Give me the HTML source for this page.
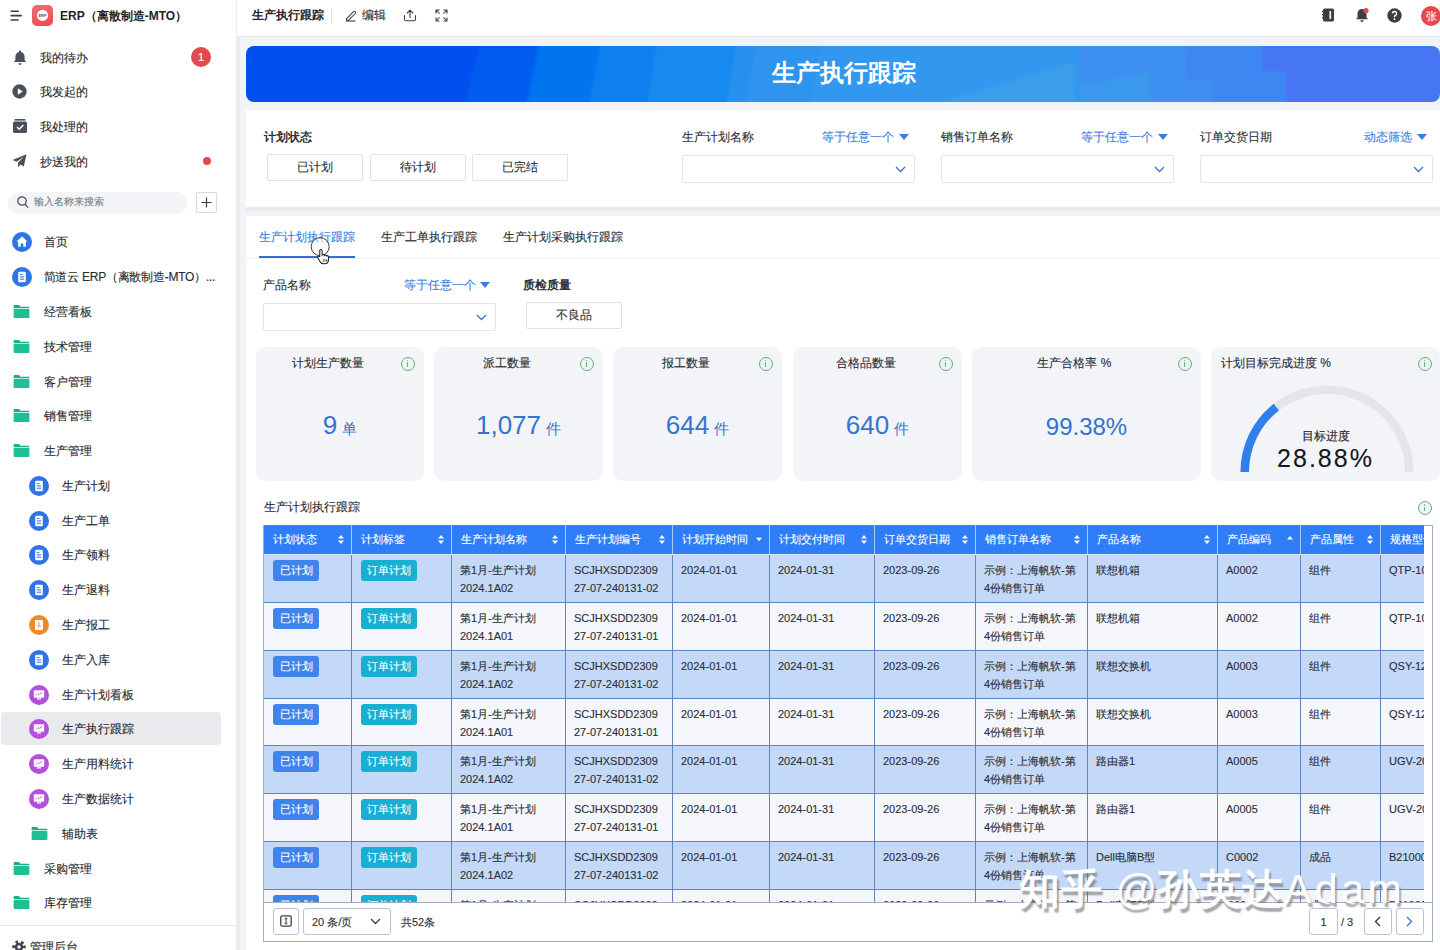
<!DOCTYPE html><html><head><meta charset="utf-8"><title>生产执行跟踪</title><style>
*{box-sizing:border-box;margin:0;padding:0}
html,body{width:1440px;height:950px;overflow:hidden;background:#f2f3f7;font-family:"Liberation Sans",sans-serif;color:#1f2329;-webkit-text-stroke:0.12px currentColor}
b,.val,[style*="bold"]{-webkit-text-stroke:0}
.abs{position:absolute}
.t{position:absolute;white-space:nowrap;line-height:1}
#side{position:absolute;left:0;top:0;width:240px;height:950px;background:#fff;border-right:4px solid #ebebef}
#top{position:absolute;left:237px;top:0;width:1203px;height:37px;background:#fff;border-bottom:1px solid #e8e9ee}
.mi{position:absolute;font-size:12px;color:#262a30;white-space:nowrap;line-height:1}
.card{position:absolute;top:347px;height:134px;background:#f3f4f8;border-radius:10px}
.ct{position:absolute;top:357px;font-size:12px;color:#2b2f36;white-space:nowrap;line-height:1}
.val{position:absolute;top:412px;font-size:26px;color:#3473d0;white-space:nowrap;line-height:1}
.val small{font-size:14.5px;margin-left:5px}
.info{position:absolute;width:14px;height:14px;border:1.3px solid #6ea483;border-radius:50%;background:#e9f8ee}
.info:before{content:"";position:absolute;left:4.9px;top:2.3px;width:1.5px;height:1.5px;background:#6ea483;border-radius:1px}
.info:after{content:"";position:absolute;left:4.9px;top:4.6px;width:1.5px;height:4.8px;background:#6ea483;border-radius:1px}
.btn{position:absolute;height:27px;border:1px solid #dfe1e6;border-radius:2px;background:#fff;font-size:12px;color:#2b2f36;text-align:center;line-height:25px}
.sel{position:absolute;height:28px;border:1px solid #e3e5ea;border-radius:2px;background:#fff}
.lbl{position:absolute;font-size:12px;color:#2b2f36;white-space:nowrap;line-height:1}
.blue{color:#3b7ddd}
.th{position:absolute;top:525px;height:29px;background:#2f7ef7;color:#fff;font-size:11px;line-height:29px;padding-left:10px;white-space:nowrap;overflow:hidden}
.cell{position:absolute;font-size:11px;color:#2b2f36;line-height:17.5px;padding-left:9px;padding-top:7px;white-space:nowrap;overflow:hidden}
.bd{position:absolute;top:8px;height:21px;border-radius:3px;color:#fff;font-size:11px;line-height:21px;text-align:center}
</style></head><body>
<div id="side">
<svg class="abs" style="left:10px;top:10px" width="14" height="12" viewBox="0 0 14 12"><rect x="0.4" y="0.4" width="8.6" height="1.6" rx=".8" fill="#3a3f47"/><rect x="0.4" y="4.8" width="11.6" height="1.6" rx=".8" fill="#3a3f47"/><rect x="0.4" y="9.2" width="8.4" height="1.6" rx=".8" fill="#3a3f47"/></svg>
<div class="abs" style="left:32px;top:5px;width:21px;height:21px;border-radius:5px;background:linear-gradient(160deg,#ee6e78,#f04a4a)"></div>
<svg class="abs" style="left:32px;top:5px" width="21" height="21" viewBox="0 0 21 21"><circle cx="10.5" cy="10.4" r="5.6" fill="#fff"/><text x="10.5" y="12" font-size="4" font-family="Liberation Sans" font-weight="bold" text-anchor="middle" fill="#6a4a50">ERP</text></svg>
<div class="t" style="left:60px;top:10px;font-size:12px;font-weight:bold;color:#1f2329">ERP（离散制造-MTO）</div>
<svg class="abs" style="left:13px;top:50px" width="14" height="15" viewBox="0 0 14 15"><path d="M7 0.5c.6 0 1 .4 1 1v.6c2.2.5 3.6 2.4 3.6 4.7v3.2l1.6 2H0.8l1.6-2V6.8c0-2.3 1.4-4.2 3.6-4.7V1.5c0-.6.4-1 1-1zM5.3 13.2h3.4a1.7 1.7 0 0 1-3.4 0z" fill="#4a505a"/></svg>
<div class="mi" style="left:39.7px;top:52px">我的待办</div>
<div class="abs" style="left:191px;top:47px;width:20px;height:20px;border-radius:50%;background:#e5484d;color:#fff;font-size:11px;text-align:center;line-height:20px">1</div>
<svg class="abs" style="left:12px;top:84px" width="15" height="15" viewBox="0 0 15 15"><circle cx="7.5" cy="7.5" r="7.2" fill="#4a505a"/><path d="M5.8 4.3v6.4l5-3.2z" fill="#fff"/></svg>
<div class="mi" style="left:39.7px;top:86px">我发起的</div>
<svg class="abs" style="left:13px;top:119px" width="14" height="14" viewBox="0 0 14 14"><rect x="0" y="2.5" width="14" height="11.5" rx="1.5" fill="#4a505a"/><rect x="1.5" y="0" width="11" height="1.6" fill="#4a505a"/><path d="M4 8l2.2 2.2L10.3 6" stroke="#fff" stroke-width="1.6" fill="none"/></svg>
<div class="mi" style="left:39.7px;top:121px">我处理的</div>
<svg class="abs" style="left:12px;top:154px" width="15" height="14" viewBox="0 0 15 14"><path d="M14.5 0.3L0.5 6l4.2 1.8L12 2.5 6 8.8v4.7l2.4-3 3.4 2z" fill="#4a505a"/></svg>
<div class="mi" style="left:39.7px;top:156px">抄送我的</div>
<div class="abs" style="left:203px;top:157px;width:8px;height:8px;border-radius:50%;background:#e5484d"></div>
<div class="abs" style="left:8px;top:192px;width:179px;height:22px;border-radius:11px;background:#f3f4f7"></div>
<svg class="abs" style="left:17px;top:196px" width="12" height="13" viewBox="0 0 12 13"><circle cx="5" cy="5" r="4.2" stroke="#4a505a" stroke-width="1.3" fill="none"/><path d="M8 8.2l3.2 3.4" stroke="#4a505a" stroke-width="1.3"/></svg>
<div class="t" style="left:34px;top:197px;font-size:10px;color:#7a808a">输入名称来搜索</div>
<div class="abs" style="left:196px;top:192px;width:21px;height:21px;border:1px solid #d7d9de;border-radius:2px;background:#fff"></div>
<svg class="abs" style="left:201px;top:197px" width="11" height="11" viewBox="0 0 11 11"><path d="M5.5 0.5v10M0.5 5.5h10" stroke="#3a3f47" stroke-width="1.2"/></svg>
<svg class="abs" style="left:12px;top:231.7px" width="20" height="20" viewBox="0 0 20 20"><circle cx="10" cy="10" r="10" fill="#2f74e6"/><path d="M10 4.5l5.5 5h-1.6v5.2h-2.6v-3.2H8.7v3.2H6.1V9.5H4.5z" fill="#fff"/></svg>
<div class="mi" style="left:43.7px;top:236px">首页</div>
<svg class="abs" style="left:12px;top:266.7px" width="20" height="20" viewBox="0 0 20 20"><circle cx="10" cy="10" r="10" fill="#2f74e6"/><rect x="6.2" y="4.8" width="7.6" height="10.4" rx="1.2" fill="#fff"/><path d="M7.8 7.6h2.6M7.8 9.9h4.4M7.8 12.2h4.4" stroke="#2f74e6" stroke-width="1"/></svg>
<div class="mi" style="left:43.7px;top:271px"><span style="letter-spacing:-0.25px">简道云 ERP（离散制造-MTO）...</span></div>
<svg class="abs" style="left:13px;top:305px" width="17" height="13" viewBox="0 0 17 14"><path d="M0 1.2C0 .5.5 0 1.2 0h4.6l1.6 1.8h8.4c.7 0 1.2.5 1.2 1.2v.6H0z" fill="#18b189"/><rect x="0" y="4.3" width="17" height="9.7" rx="1" fill="#1fbf95"/></svg>
<div class="mi" style="left:43.7px;top:306px">经营看板</div>
<svg class="abs" style="left:13px;top:340px" width="17" height="13" viewBox="0 0 17 14"><path d="M0 1.2C0 .5.5 0 1.2 0h4.6l1.6 1.8h8.4c.7 0 1.2.5 1.2 1.2v.6H0z" fill="#18b189"/><rect x="0" y="4.3" width="17" height="9.7" rx="1" fill="#1fbf95"/></svg>
<div class="mi" style="left:43.7px;top:341px">技术管理</div>
<svg class="abs" style="left:13px;top:375px" width="17" height="13" viewBox="0 0 17 14"><path d="M0 1.2C0 .5.5 0 1.2 0h4.6l1.6 1.8h8.4c.7 0 1.2.5 1.2 1.2v.6H0z" fill="#18b189"/><rect x="0" y="4.3" width="17" height="9.7" rx="1" fill="#1fbf95"/></svg>
<div class="mi" style="left:43.7px;top:376px">客户管理</div>
<svg class="abs" style="left:13px;top:409px" width="17" height="13" viewBox="0 0 17 14"><path d="M0 1.2C0 .5.5 0 1.2 0h4.6l1.6 1.8h8.4c.7 0 1.2.5 1.2 1.2v.6H0z" fill="#18b189"/><rect x="0" y="4.3" width="17" height="9.7" rx="1" fill="#1fbf95"/></svg>
<div class="mi" style="left:43.7px;top:410px">销售管理</div>
<svg class="abs" style="left:13px;top:444px" width="17" height="13" viewBox="0 0 17 14"><path d="M0 1.2C0 .5.5 0 1.2 0h4.6l1.6 1.8h8.4c.7 0 1.2.5 1.2 1.2v.6H0z" fill="#18b189"/><rect x="0" y="4.3" width="17" height="9.7" rx="1" fill="#1fbf95"/></svg>
<div class="mi" style="left:43.7px;top:445px">生产管理</div>
<div class="abs" style="left:1px;top:712px;width:220px;height:33px;border-radius:4px;background:#e9eaee"></div>
<svg class="abs" style="left:29px;top:475.7px" width="20" height="20" viewBox="0 0 20 20"><circle cx="10" cy="10" r="10" fill="#2f74e6"/><rect x="6.2" y="4.8" width="7.6" height="10.4" rx="1.2" fill="#fff"/><path d="M7.8 7.6h2.6M7.8 9.9h4.4M7.8 12.2h4.4" stroke="#2f74e6" stroke-width="1"/></svg>
<div class="mi" style="left:61.7px;top:480px">生产计划</div>
<svg class="abs" style="left:29px;top:510.7px" width="20" height="20" viewBox="0 0 20 20"><circle cx="10" cy="10" r="10" fill="#2f74e6"/><rect x="6.2" y="4.8" width="7.6" height="10.4" rx="1.2" fill="#fff"/><path d="M7.8 7.6h2.6M7.8 9.9h4.4M7.8 12.2h4.4" stroke="#2f74e6" stroke-width="1"/></svg>
<div class="mi" style="left:61.7px;top:515px">生产工单</div>
<svg class="abs" style="left:29px;top:544.7px" width="20" height="20" viewBox="0 0 20 20"><circle cx="10" cy="10" r="10" fill="#2f74e6"/><rect x="6.2" y="4.8" width="7.6" height="10.4" rx="1.2" fill="#fff"/><path d="M7.8 7.6h2.6M7.8 9.9h4.4M7.8 12.2h4.4" stroke="#2f74e6" stroke-width="1"/></svg>
<div class="mi" style="left:61.7px;top:549px">生产领料</div>
<svg class="abs" style="left:29px;top:579.7px" width="20" height="20" viewBox="0 0 20 20"><circle cx="10" cy="10" r="10" fill="#2f74e6"/><rect x="6.2" y="4.8" width="7.6" height="10.4" rx="1.2" fill="#fff"/><path d="M7.8 7.6h2.6M7.8 9.9h4.4M7.8 12.2h4.4" stroke="#2f74e6" stroke-width="1"/></svg>
<div class="mi" style="left:61.7px;top:584px">生产退料</div>
<svg class="abs" style="left:29px;top:614.7px" width="20" height="20" viewBox="0 0 20 20"><circle cx="10" cy="10" r="10" fill="#ef8a2a"/><rect x="6" y="5" width="8" height="10" rx="1" fill="#fff"/><path d="M10 7v4M8 11h4" stroke="#ef8a2a" stroke-width="0.9"/></svg>
<div class="mi" style="left:61.7px;top:619px">生产报工</div>
<svg class="abs" style="left:29px;top:649.7px" width="20" height="20" viewBox="0 0 20 20"><circle cx="10" cy="10" r="10" fill="#2f74e6"/><rect x="6.2" y="4.8" width="7.6" height="10.4" rx="1.2" fill="#fff"/><path d="M7.8 7.6h2.6M7.8 9.9h4.4M7.8 12.2h4.4" stroke="#2f74e6" stroke-width="1"/></svg>
<div class="mi" style="left:61.7px;top:654px">生产入库</div>
<svg class="abs" style="left:29px;top:684.7px" width="20" height="20" viewBox="0 0 20 20"><circle cx="10" cy="10" r="10" fill="#b44fe0"/><rect x="4.8" y="5.3" width="10.4" height="7.4" rx="1" fill="#fff"/><rect x="8" y="13.2" width="4" height="1.3" fill="#fff"/><path d="M7 10.5l2-2 1.5 1.2L13 7.3" stroke="#b44fe0" stroke-width="0.9" fill="none"/></svg>
<div class="mi" style="left:61.7px;top:689px">生产计划看板</div>
<svg class="abs" style="left:29px;top:718.7px" width="20" height="20" viewBox="0 0 20 20"><circle cx="10" cy="10" r="10" fill="#b44fe0"/><rect x="4.8" y="5.3" width="10.4" height="7.4" rx="1" fill="#fff"/><rect x="8" y="13.2" width="4" height="1.3" fill="#fff"/><path d="M7 10.5l2-2 1.5 1.2L13 7.3" stroke="#b44fe0" stroke-width="0.9" fill="none"/></svg>
<div class="mi" style="left:61.7px;top:723px">生产执行跟踪</div>
<svg class="abs" style="left:29px;top:753.7px" width="20" height="20" viewBox="0 0 20 20"><circle cx="10" cy="10" r="10" fill="#b44fe0"/><rect x="4.8" y="5.3" width="10.4" height="7.4" rx="1" fill="#fff"/><rect x="8" y="13.2" width="4" height="1.3" fill="#fff"/><path d="M7 10.5l2-2 1.5 1.2L13 7.3" stroke="#b44fe0" stroke-width="0.9" fill="none"/></svg>
<div class="mi" style="left:61.7px;top:758px">生产用料统计</div>
<svg class="abs" style="left:29px;top:788.7px" width="20" height="20" viewBox="0 0 20 20"><circle cx="10" cy="10" r="10" fill="#b44fe0"/><rect x="4.8" y="5.3" width="10.4" height="7.4" rx="1" fill="#fff"/><rect x="8" y="13.2" width="4" height="1.3" fill="#fff"/><path d="M7 10.5l2-2 1.5 1.2L13 7.3" stroke="#b44fe0" stroke-width="0.9" fill="none"/></svg>
<div class="mi" style="left:61.7px;top:793px">生产数据统计</div>
<svg class="abs" style="left:31px;top:827px" width="17" height="13" viewBox="0 0 17 14"><path d="M0 1.2C0 .5.5 0 1.2 0h4.6l1.6 1.8h8.4c.7 0 1.2.5 1.2 1.2v.6H0z" fill="#18b189"/><rect x="0" y="4.3" width="17" height="9.7" rx="1" fill="#1fbf95"/></svg>
<div class="mi" style="left:61.7px;top:828px">辅助表</div>
<svg class="abs" style="left:13px;top:862px" width="17" height="13" viewBox="0 0 17 14"><path d="M0 1.2C0 .5.5 0 1.2 0h4.6l1.6 1.8h8.4c.7 0 1.2.5 1.2 1.2v.6H0z" fill="#18b189"/><rect x="0" y="4.3" width="17" height="9.7" rx="1" fill="#1fbf95"/></svg>
<div class="mi" style="left:43.7px;top:863px">采购管理</div>
<svg class="abs" style="left:13px;top:896px" width="17" height="13" viewBox="0 0 17 14"><path d="M0 1.2C0 .5.5 0 1.2 0h4.6l1.6 1.8h8.4c.7 0 1.2.5 1.2 1.2v.6H0z" fill="#18b189"/><rect x="0" y="4.3" width="17" height="9.7" rx="1" fill="#1fbf95"/></svg>
<div class="mi" style="left:43.7px;top:897px">库存管理</div>
<div class="abs" style="left:0;top:925px;width:236px;height:1px;background:#e6e8ec"></div>
<svg class="abs" style="left:12px;top:940px" width="14" height="14" viewBox="0 0 14 14"><circle cx="7" cy="7" r="5.3" fill="none" stroke="#3f444c" stroke-width="3" stroke-dasharray="2.6 2.95" transform="rotate(-15 7 7)"/><circle cx="7" cy="7" r="4.3" fill="#3f444c"/><circle cx="7" cy="7" r="1.7" fill="#fff"/></svg>
<div class="mi" style="left:30px;top:941px">管理后台</div>
</div>
<div id="top"></div>
<div class="t" style="left:252px;top:9px;font-size:12px;font-weight:bold;color:#1f2329">生产执行跟踪</div>
<div class="abs" style="left:331px;top:8px;width:1px;height:16px;background:#e3e5e9"></div>
<svg class="abs" style="left:344px;top:9px" width="14" height="13" viewBox="0 0 14 13"><path d="M2 12h9.5" stroke="#3a3f47" stroke-width="1.1"/><path d="M2.6 9.6l6.9-6.9a1.2 1.2 0 0 1 1.7 0l.1.1a1.2 1.2 0 0 1 0 1.7L4.4 11.4H2.6z" stroke="#3a3f47" stroke-width="1.05" fill="none" stroke-linejoin="round"/></svg>
<div class="t" style="left:362px;top:9px;font-size:12px;color:#2b2f36">编辑</div>
<svg class="abs" style="left:403px;top:9px" width="14" height="13" viewBox="0 0 14 13"><path d="M7 8.5V1.3M4.2 4l2.8-2.8L9.8 4" stroke="#3a3f47" stroke-width="1.1" fill="none" stroke-linecap="round" stroke-linejoin="round"/><path d="M1.5 6.5v3.8c0 .9.6 1.4 1.4 1.4h8.2c.8 0 1.4-.5 1.4-1.4V6.5" stroke="#3a3f47" stroke-width="1.1" fill="none" stroke-linecap="round"/></svg>
<svg class="abs" style="left:435px;top:9px" width="13" height="13" viewBox="0 0 13 13"><g stroke="#3a3f47" stroke-width="1.05" fill="none" stroke-linecap="round" stroke-linejoin="round"><path d="M1 4.2V1h3.2M1 1l3.3 3.3"/><path d="M8.8 1H12v3.2M12 1L8.7 4.3"/><path d="M12 8.8V12H8.8M12 12L8.7 8.7"/><path d="M4.2 12H1V8.8M1 12l3.3-3.3"/></g></svg>
<svg class="abs" style="left:1322px;top:8px" width="13" height="14" viewBox="0 0 13 14"><rect x="1" y="0.5" width="11" height="13" rx="1.5" fill="#3a3f47"/><rect x="0" y="3" width="2" height="1.3" fill="#3a3f47"/><rect x="0" y="6" width="2" height="1.3" fill="#3a3f47"/><rect x="0" y="9" width="2" height="1.3" fill="#3a3f47"/><rect x="7.5" y="3" width="1.6" height="8" fill="#fff"/></svg>
<svg class="abs" style="left:1355px;top:8px" width="14" height="15" viewBox="0 0 14 15"><path d="M7 1c2.7 0 4.5 2 4.5 4.6v3.6l1.5 2H1l1.5-2V5.6C2.5 3 4.3 1 7 1zM5.3 12.3h3.4a1.7 1.7 0 0 1-3.4 0z" fill="#3a3f47"/><circle cx="11" cy="2.6" r="2.6" fill="#e5484d"/></svg>
<svg class="abs" style="left:1387px;top:8px" width="15" height="15" viewBox="0 0 15 15"><circle cx="7.5" cy="7.5" r="7.2" fill="#3a3f47"/><path d="M5.4 5.6a2.1 2.1 0 1 1 3 1.9c-.6.3-.9.7-.9 1.3v.4" stroke="#fff" stroke-width="1.4" fill="none"/><circle cx="7.5" cy="11.2" r="0.9" fill="#fff"/></svg>
<div class="abs" style="left:1421px;top:6px;width:20px;height:20px;border-radius:50%;background:#e5484d;color:#fff;font-size:11px;text-align:center;line-height:20px">张</div>
<div class="abs" style="left:246px;top:46px;width:1194px;height:56px;border-radius:8px;overflow:hidden"><svg class="abs" style="left:0;top:0" width="1194" height="56"><defs><filter id="bb" x="-5%" y="-50%" width="110%" height="200%"><feGaussianBlur stdDeviation="1.6"/></filter></defs><g filter="url(#bb)"><rect x="-20" y="-20" width="1240" height="96" fill="#0050ef"/><polygon points="236.00000000000003,-10 1220,-10 1220,66 216.6,66" fill="#005cf0"/><polygon points="294.4,-10 1220,-10 1220,66 279.1,66" fill="#0474ef"/><polygon points="355.4,-10 1220,-10 1220,66 341.6,66" fill="#0a7fef"/><polygon points="412.0,-10 1220,-10 1220,66 399.6,66" fill="#188af0"/><polygon points="492.19999999999993,-10 1220,-10 1220,66 479.1,66" fill="#2590ef"/><polygon points="512.4,-10 1220,-10 1220,66 496.6,66" fill="#2e94ee"/><polygon points="576.4,-10 1220,-10 1220,66 561.6,66" fill="#3397ee"/><polygon points="694,56 829,16 829,56" fill="#3a9eeb"/><polygon points="834,0 939,0 939,56 834,56" fill="#3e90f0"/><polygon points="834,40 904,26 904,56 834,56" fill="#3b99ed"/><polygon points="939,0 1039,0 1039,56 939,56" fill="#3e87f2"/><polygon points="939,34 966,34 966,56 939,56" fill="#408ff0"/><polygon points="1016,-10 1220,-10 1220,66 1039,66 1039,26 1016,26" fill="#4676f2"/></g></svg>
<div class="t" style="left:0;width:1195px;text-align:center;top:16px;font-size:23.5px;font-weight:bold;color:#fff">生产执行跟踪</div>
</div>
<div class="abs" style="left:246px;top:110px;width:1194px;height:97px;background:#fff"></div>
<div class="abs" style="left:246px;top:207px;width:1194px;height:4px;background:#ebebef"></div>
<div class="lbl" style="left:264px;top:131px;font-weight:bold">计划状态</div>
<div class="btn" style="left:267px;top:154px;width:96px">已计划</div>
<div class="btn" style="left:370px;top:154px;width:96px">待计划</div>
<div class="btn" style="left:472px;top:154px;width:96px">已完结</div>
<div class="lbl" style="left:682px;top:131px">生产计划名称</div>
<div class="lbl blue" style="left:822px;top:131px">等于任意一个</div>
<svg class="abs" style="left:899px;top:134px" width="10" height="6" viewBox="0 0 10 6"><path d="M0 0h10L5 6z" fill="#3b7ddd"/></svg>
<div class="sel" style="left:682px;top:155px;width:233px"></div>
<svg class="abs" style="left:895px;top:166px" width="11" height="7" viewBox="0 0 11 7"><path d="M1 1l4.5 4.5L10 1" stroke="#3b6fc9" stroke-width="1.3" fill="none"/></svg>
<div class="lbl" style="left:941px;top:131px">销售订单名称</div>
<div class="lbl blue" style="left:1081px;top:131px">等于任意一个</div>
<svg class="abs" style="left:1158px;top:134px" width="10" height="6" viewBox="0 0 10 6"><path d="M0 0h10L5 6z" fill="#3b7ddd"/></svg>
<div class="sel" style="left:941px;top:155px;width:233px"></div>
<svg class="abs" style="left:1154px;top:166px" width="11" height="7" viewBox="0 0 11 7"><path d="M1 1l4.5 4.5L10 1" stroke="#3b6fc9" stroke-width="1.3" fill="none"/></svg>
<div class="lbl" style="left:1200px;top:131px">订单交货日期</div>
<div class="lbl blue" style="left:1364px;top:131px">动态筛选</div>
<svg class="abs" style="left:1417px;top:134px" width="10" height="6" viewBox="0 0 10 6"><path d="M0 0h10L5 6z" fill="#3b7ddd"/></svg>
<div class="sel" style="left:1200px;top:155px;width:233px"></div>
<svg class="abs" style="left:1413px;top:166px" width="11" height="7" viewBox="0 0 11 7"><path d="M1 1l4.5 4.5L10 1" stroke="#3b6fc9" stroke-width="1.3" fill="none"/></svg>
<div class="abs" style="left:246px;top:216px;width:1194px;height:734px;background:#fff"></div>
<div class="t" style="left:259px;top:231px;font-size:12px;color:#3b7ddd">生产计划执行跟踪</div>
<div class="t" style="left:381px;top:231px;font-size:12px;color:#2b2f36">生产工单执行跟踪</div>
<div class="t" style="left:503px;top:231px;font-size:12px;color:#2b2f36">生产计划采购执行跟踪</div>
<div class="abs" style="left:246px;top:258px;width:1194px;height:1px;background:#ebedf0"></div>
<div class="abs" style="left:259px;top:256px;width:96px;height:2px;background:#2f6fd6"></div>
<svg class="abs" style="left:308px;top:235px" width="26" height="30" viewBox="0 0 26 30"><circle cx="12.2" cy="11.7" r="9" fill="rgba(255,255,255,.55)" stroke="#3a3a3a" stroke-width="1"/><g transform="translate(8.5,13) scale(0.68)"><path d="M6.5 2.2c1 0 1.8.8 1.8 1.8v6.2c.3-.5.9-.8 1.5-.8.9 0 1.6.6 1.7 1.4.3-.4.8-.6 1.4-.6.9 0 1.6.7 1.7 1.5.3-.3.7-.5 1.2-.5 1 0 1.8.8 1.8 1.8v4.3c0 3.4-2.6 6-6 6h-1.2c-2 0-3.6-.9-4.7-2.5L2 14.6c-.5-.8-.3-1.8.5-2.3.8-.5 1.7-.3 2.2.4l.1.2V4c0-1 .8-1.8 1.7-1.8z" fill="#fff" stroke="#222" stroke-width="1.5"/><path d="M10 16.5v3.5M12.5 16.5v3.5M15 16.5v3.5" stroke="#222" stroke-width="1.2"/></g></svg>
<div class="lbl" style="left:263px;top:279px">产品名称</div>
<div class="lbl blue" style="left:404px;top:279px">等于任意一个</div>
<svg class="abs" style="left:480px;top:282px" width="10" height="6" viewBox="0 0 10 6"><path d="M0 0h10L5 6z" fill="#3b7ddd"/></svg>
<div class="sel" style="left:263px;top:303px;width:233px"></div>
<svg class="abs" style="left:476px;top:314px" width="11" height="7" viewBox="0 0 11 7"><path d="M1 1l4.5 4.5L10 1" stroke="#3b6fc9" stroke-width="1.3" fill="none"/></svg>
<div class="lbl" style="left:523px;top:279px;font-weight:bold">质检质量</div>
<div class="btn" style="left:526px;top:302px;width:96px">不良品</div>
<div class="card" style="left:256px;width:168px"></div>
<div class="ct" style="left:256px;width:144px;text-align:center">计划生产数量</div>
<div class="info" style="left:401px;top:356.5px"></div>
<div class="val" style="left:256px;width:168px;text-align:center">9<small>单</small></div>
<div class="card" style="left:434px;width:169px"></div>
<div class="ct" style="left:434px;width:145px;text-align:center">派工数量</div>
<div class="info" style="left:580px;top:356.5px"></div>
<div class="val" style="left:434px;width:169px;text-align:center">1,077<small>件</small></div>
<div class="card" style="left:613px;width:169px"></div>
<div class="ct" style="left:613px;width:145px;text-align:center">报工数量</div>
<div class="info" style="left:759px;top:356.5px"></div>
<div class="val" style="left:613px;width:169px;text-align:center">644<small>件</small></div>
<div class="card" style="left:793px;width:169px"></div>
<div class="ct" style="left:793px;width:145px;text-align:center">合格品数量</div>
<div class="info" style="left:939px;top:356.5px"></div>
<div class="val" style="left:793px;width:169px;text-align:center">640<small>件</small></div>
<div class="card" style="left:972px;width:229px"></div>
<div class="ct" style="left:972px;width:205px;text-align:center">生产合格率 %</div>
<div class="info" style="left:1178px;top:356.5px"></div>
<div class="val" style="font-size:24px;top:414.5px;left:972px;width:229px;text-align:center">99.38%</div>
<div class="card" style="left:1211px;width:229px"></div>
<div class="ct" style="left:1221px">计划目标完成进度 %</div>
<div class="info" style="left:1418px;top:356.5px"></div>
<svg class="abs" style="left:1211px;top:347px" width="229" height="133"><path d="M33.70 125.00 A82.3 82.3 0 0 1 198.30 125.00" stroke="#e4e5ea" stroke-width="8.5" fill="none"/><path d="M33.70 125.00 A82.3 82.3 0 0 1 65.33 60.15" stroke="#2f80ed" stroke-width="8.5" fill="none"/></svg>
<div class="t" style="left:1211px;width:229px;text-align:center;top:430px;font-size:12px;color:#1f2329">目标进度</div>
<div class="t" style="left:1211px;width:229px;text-align:center;top:445.5px;font-size:25px;letter-spacing:2px;color:#161820">28.88%</div>
<div class="t" style="left:264px;top:501px;font-size:12px;color:#2b2f36">生产计划执行跟踪</div>
<div class="info" style="left:1418px;top:501px"></div>
<div class="abs" style="left:263px;top:525px;width:1170px;height:417px;border:1px solid #9fb0c6;background:#fff"></div>
<div class="abs" style="left:264px;top:525px;width:1160px;height:377px;overflow:hidden">
<div class="th" style="left:-1px;top:0;width:88px">计划状态</div>
<svg class="abs" style="left:74px;top:10px" width="6" height="9" viewBox="0 0 7 10" preserveAspectRatio="none"><path d="M0 4h7L3.5 0z" fill="#fff"/><path d="M0 6h7L3.5 10z" fill="#fff"/></svg>
<div class="th" style="left:87px;top:0;width:100px">计划标签</div>
<svg class="abs" style="left:174px;top:10px" width="6" height="9" viewBox="0 0 7 10" preserveAspectRatio="none"><path d="M0 4h7L3.5 0z" fill="#fff"/><path d="M0 6h7L3.5 10z" fill="#fff"/></svg>
<div class="th" style="left:187px;top:0;width:114px">生产计划名称</div>
<svg class="abs" style="left:288px;top:10px" width="6" height="9" viewBox="0 0 7 10" preserveAspectRatio="none"><path d="M0 4h7L3.5 0z" fill="#fff"/><path d="M0 6h7L3.5 10z" fill="#fff"/></svg>
<div class="th" style="left:301px;top:0;width:107px">生产计划编号</div>
<svg class="abs" style="left:395px;top:10px" width="6" height="9" viewBox="0 0 7 10" preserveAspectRatio="none"><path d="M0 4h7L3.5 0z" fill="#fff"/><path d="M0 6h7L3.5 10z" fill="#fff"/></svg>
<div class="th" style="left:408px;top:0;width:97px">计划开始时间</div>
<svg class="abs" style="left:492px;top:10px" width="6" height="9" viewBox="0 0 7 10" preserveAspectRatio="none"><path d="M0 3h7L3.5 7z" fill="#fff"/></svg>
<div class="th" style="left:505px;top:0;width:105px">计划交付时间</div>
<svg class="abs" style="left:597px;top:10px" width="6" height="9" viewBox="0 0 7 10" preserveAspectRatio="none"><path d="M0 4h7L3.5 0z" fill="#fff"/><path d="M0 6h7L3.5 10z" fill="#fff"/></svg>
<div class="th" style="left:610px;top:0;width:101px">订单交货日期</div>
<svg class="abs" style="left:698px;top:10px" width="6" height="9" viewBox="0 0 7 10" preserveAspectRatio="none"><path d="M0 4h7L3.5 0z" fill="#fff"/><path d="M0 6h7L3.5 10z" fill="#fff"/></svg>
<div class="th" style="left:711px;top:0;width:112px">销售订单名称</div>
<svg class="abs" style="left:810px;top:10px" width="6" height="9" viewBox="0 0 7 10" preserveAspectRatio="none"><path d="M0 4h7L3.5 0z" fill="#fff"/><path d="M0 6h7L3.5 10z" fill="#fff"/></svg>
<div class="th" style="left:823px;top:0;width:130px">产品名称</div>
<svg class="abs" style="left:940px;top:10px" width="6" height="9" viewBox="0 0 7 10" preserveAspectRatio="none"><path d="M0 4h7L3.5 0z" fill="#fff"/><path d="M0 6h7L3.5 10z" fill="#fff"/></svg>
<div class="th" style="left:953px;top:0;width:83px">产品编码</div>
<svg class="abs" style="left:1023px;top:10px" width="6" height="9" viewBox="0 0 7 10" preserveAspectRatio="none"><path d="M0 5h7L3.5 1z" fill="#fff"/></svg>
<div class="th" style="left:1036px;top:0;width:80px">产品属性</div>
<svg class="abs" style="left:1103px;top:10px" width="6" height="9" viewBox="0 0 7 10" preserveAspectRatio="none"><path d="M0 4h7L3.5 0z" fill="#fff"/><path d="M0 6h7L3.5 10z" fill="#fff"/></svg>
<div class="th" style="left:1116px;top:0;width:100px">规格型号</div>
<div class="abs" style="left:0;top:29px;width:1160px;height:1px;background:#d6e6fd"></div>
<div class="abs" style="left:0;top:0;width:1160px;height:1px;background:#4d7fd6"></div>
<div class="abs" style="left:87px;top:0;width:1px;height:29px;background:#a9cdfb"></div>
<div class="abs" style="left:187px;top:0;width:1px;height:29px;background:#a9cdfb"></div>
<div class="abs" style="left:301px;top:0;width:1px;height:29px;background:#a9cdfb"></div>
<div class="abs" style="left:408px;top:0;width:1px;height:29px;background:#a9cdfb"></div>
<div class="abs" style="left:505px;top:0;width:1px;height:29px;background:#a9cdfb"></div>
<div class="abs" style="left:610px;top:0;width:1px;height:29px;background:#a9cdfb"></div>
<div class="abs" style="left:711px;top:0;width:1px;height:29px;background:#a9cdfb"></div>
<div class="abs" style="left:823px;top:0;width:1px;height:29px;background:#a9cdfb"></div>
<div class="abs" style="left:953px;top:0;width:1px;height:29px;background:#a9cdfb"></div>
<div class="abs" style="left:1036px;top:0;width:1px;height:29px;background:#a9cdfb"></div>
<div class="abs" style="left:1116px;top:0;width:1px;height:29px;background:#a9cdfb"></div>
<div class="abs" style="left:0;top:30px;width:1160px;height:48px;background:#c4d8f8"></div>
<div class="abs" style="left:0;top:77px;width:1160px;height:1px;background:#6285b8"></div>
<div class="cell" style="left:187px;top:30px;width:114px;height:48px">第1月-生产计划<br>2024.1A02</div>
<div class="cell" style="left:301px;top:30px;width:107px;height:48px">SCJHXSDD2309<br>27-07-240131-02</div>
<div class="cell" style="left:408px;top:30px;width:97px;height:48px">2024-01-01</div>
<div class="cell" style="left:505px;top:30px;width:105px;height:48px">2024-01-31</div>
<div class="cell" style="left:610px;top:30px;width:101px;height:48px">2023-09-26</div>
<div class="cell" style="left:711px;top:30px;width:112px;height:48px">示例：上海帆软-第<br>4份销售订单</div>
<div class="cell" style="left:823px;top:30px;width:130px;height:48px">联想机箱</div>
<div class="cell" style="left:953px;top:30px;width:83px;height:48px">A0002</div>
<div class="cell" style="left:1036px;top:30px;width:80px;height:48px">组件</div>
<div class="cell" style="left:1116px;top:30px;width:100px;height:48px">QTP-1001</div>
<div class="bd" style="left:9px;top:35px;width:46px;background:#3f84ec">已计划</div>
<div class="bd" style="left:97px;top:35px;width:56px;background:#17b0d2">订单计划</div>
<div class="abs" style="left:0;top:78px;width:1160px;height:48px;background:#f4f6fb"></div>
<div class="abs" style="left:0;top:125px;width:1160px;height:1px;background:#6285b8"></div>
<div class="cell" style="left:187px;top:78px;width:114px;height:48px">第1月-生产计划<br>2024.1A01</div>
<div class="cell" style="left:301px;top:78px;width:107px;height:48px">SCJHXSDD2309<br>27-07-240131-01</div>
<div class="cell" style="left:408px;top:78px;width:97px;height:48px">2024-01-01</div>
<div class="cell" style="left:505px;top:78px;width:105px;height:48px">2024-01-31</div>
<div class="cell" style="left:610px;top:78px;width:101px;height:48px">2023-09-26</div>
<div class="cell" style="left:711px;top:78px;width:112px;height:48px">示例：上海帆软-第<br>4份销售订单</div>
<div class="cell" style="left:823px;top:78px;width:130px;height:48px">联想机箱</div>
<div class="cell" style="left:953px;top:78px;width:83px;height:48px">A0002</div>
<div class="cell" style="left:1036px;top:78px;width:80px;height:48px">组件</div>
<div class="cell" style="left:1116px;top:78px;width:100px;height:48px">QTP-1001</div>
<div class="bd" style="left:9px;top:83px;width:46px;background:#3f84ec">已计划</div>
<div class="bd" style="left:97px;top:83px;width:56px;background:#17b0d2">订单计划</div>
<div class="abs" style="left:0;top:126px;width:1160px;height:48px;background:#c4d8f8"></div>
<div class="abs" style="left:0;top:173px;width:1160px;height:1px;background:#6285b8"></div>
<div class="cell" style="left:187px;top:126px;width:114px;height:48px">第1月-生产计划<br>2024.1A02</div>
<div class="cell" style="left:301px;top:126px;width:107px;height:48px">SCJHXSDD2309<br>27-07-240131-02</div>
<div class="cell" style="left:408px;top:126px;width:97px;height:48px">2024-01-01</div>
<div class="cell" style="left:505px;top:126px;width:105px;height:48px">2024-01-31</div>
<div class="cell" style="left:610px;top:126px;width:101px;height:48px">2023-09-26</div>
<div class="cell" style="left:711px;top:126px;width:112px;height:48px">示例：上海帆软-第<br>4份销售订单</div>
<div class="cell" style="left:823px;top:126px;width:130px;height:48px">联想交换机</div>
<div class="cell" style="left:953px;top:126px;width:83px;height:48px">A0003</div>
<div class="cell" style="left:1036px;top:126px;width:80px;height:48px">组件</div>
<div class="cell" style="left:1116px;top:126px;width:100px;height:48px">QSY-1234</div>
<div class="bd" style="left:9px;top:131px;width:46px;background:#3f84ec">已计划</div>
<div class="bd" style="left:97px;top:131px;width:56px;background:#17b0d2">订单计划</div>
<div class="abs" style="left:0;top:174px;width:1160px;height:47px;background:#f4f6fb"></div>
<div class="abs" style="left:0;top:220px;width:1160px;height:1px;background:#6285b8"></div>
<div class="cell" style="left:187px;top:174px;width:114px;height:48px">第1月-生产计划<br>2024.1A01</div>
<div class="cell" style="left:301px;top:174px;width:107px;height:48px">SCJHXSDD2309<br>27-07-240131-01</div>
<div class="cell" style="left:408px;top:174px;width:97px;height:48px">2024-01-01</div>
<div class="cell" style="left:505px;top:174px;width:105px;height:48px">2024-01-31</div>
<div class="cell" style="left:610px;top:174px;width:101px;height:48px">2023-09-26</div>
<div class="cell" style="left:711px;top:174px;width:112px;height:48px">示例：上海帆软-第<br>4份销售订单</div>
<div class="cell" style="left:823px;top:174px;width:130px;height:48px">联想交换机</div>
<div class="cell" style="left:953px;top:174px;width:83px;height:48px">A0003</div>
<div class="cell" style="left:1036px;top:174px;width:80px;height:48px">组件</div>
<div class="cell" style="left:1116px;top:174px;width:100px;height:48px">QSY-1234</div>
<div class="bd" style="left:9px;top:179px;width:46px;background:#3f84ec">已计划</div>
<div class="bd" style="left:97px;top:179px;width:56px;background:#17b0d2">订单计划</div>
<div class="abs" style="left:0;top:221px;width:1160px;height:48px;background:#c4d8f8"></div>
<div class="abs" style="left:0;top:268px;width:1160px;height:1px;background:#6285b8"></div>
<div class="cell" style="left:187px;top:221px;width:114px;height:48px">第1月-生产计划<br>2024.1A02</div>
<div class="cell" style="left:301px;top:221px;width:107px;height:48px">SCJHXSDD2309<br>27-07-240131-02</div>
<div class="cell" style="left:408px;top:221px;width:97px;height:48px">2024-01-01</div>
<div class="cell" style="left:505px;top:221px;width:105px;height:48px">2024-01-31</div>
<div class="cell" style="left:610px;top:221px;width:101px;height:48px">2023-09-26</div>
<div class="cell" style="left:711px;top:221px;width:112px;height:48px">示例：上海帆软-第<br>4份销售订单</div>
<div class="cell" style="left:823px;top:221px;width:130px;height:48px">路由器1</div>
<div class="cell" style="left:953px;top:221px;width:83px;height:48px">A0005</div>
<div class="cell" style="left:1036px;top:221px;width:80px;height:48px">组件</div>
<div class="cell" style="left:1116px;top:221px;width:100px;height:48px">UGV-2001</div>
<div class="bd" style="left:9px;top:226px;width:46px;background:#3f84ec">已计划</div>
<div class="bd" style="left:97px;top:226px;width:56px;background:#17b0d2">订单计划</div>
<div class="abs" style="left:0;top:269px;width:1160px;height:48px;background:#f4f6fb"></div>
<div class="abs" style="left:0;top:316px;width:1160px;height:1px;background:#6285b8"></div>
<div class="cell" style="left:187px;top:269px;width:114px;height:48px">第1月-生产计划<br>2024.1A01</div>
<div class="cell" style="left:301px;top:269px;width:107px;height:48px">SCJHXSDD2309<br>27-07-240131-01</div>
<div class="cell" style="left:408px;top:269px;width:97px;height:48px">2024-01-01</div>
<div class="cell" style="left:505px;top:269px;width:105px;height:48px">2024-01-31</div>
<div class="cell" style="left:610px;top:269px;width:101px;height:48px">2023-09-26</div>
<div class="cell" style="left:711px;top:269px;width:112px;height:48px">示例：上海帆软-第<br>4份销售订单</div>
<div class="cell" style="left:823px;top:269px;width:130px;height:48px">路由器1</div>
<div class="cell" style="left:953px;top:269px;width:83px;height:48px">A0005</div>
<div class="cell" style="left:1036px;top:269px;width:80px;height:48px">组件</div>
<div class="cell" style="left:1116px;top:269px;width:100px;height:48px">UGV-2001</div>
<div class="bd" style="left:9px;top:274px;width:46px;background:#3f84ec">已计划</div>
<div class="bd" style="left:97px;top:274px;width:56px;background:#17b0d2">订单计划</div>
<div class="abs" style="left:0;top:317px;width:1160px;height:48px;background:#c4d8f8"></div>
<div class="abs" style="left:0;top:364px;width:1160px;height:1px;background:#6285b8"></div>
<div class="cell" style="left:187px;top:317px;width:114px;height:48px">第1月-生产计划<br>2024.1A02</div>
<div class="cell" style="left:301px;top:317px;width:107px;height:48px">SCJHXSDD2309<br>27-07-240131-02</div>
<div class="cell" style="left:408px;top:317px;width:97px;height:48px">2024-01-01</div>
<div class="cell" style="left:505px;top:317px;width:105px;height:48px">2024-01-31</div>
<div class="cell" style="left:610px;top:317px;width:101px;height:48px">2023-09-26</div>
<div class="cell" style="left:711px;top:317px;width:112px;height:48px">示例：上海帆软-第<br>4份销售订单</div>
<div class="cell" style="left:823px;top:317px;width:130px;height:48px">Dell电脑B型</div>
<div class="cell" style="left:953px;top:317px;width:83px;height:48px">C0002</div>
<div class="cell" style="left:1036px;top:317px;width:80px;height:48px">成品</div>
<div class="cell" style="left:1116px;top:317px;width:100px;height:48px">B2100001</div>
<div class="bd" style="left:9px;top:322px;width:46px;background:#3f84ec">已计划</div>
<div class="bd" style="left:97px;top:322px;width:56px;background:#17b0d2">订单计划</div>
<div class="abs" style="left:0;top:365px;width:1160px;height:48px;background:#f4f6fb"></div>
<div class="abs" style="left:0;top:412px;width:1160px;height:1px;background:#6285b8"></div>
<div class="cell" style="left:187px;top:365px;width:114px;height:48px">第1月-生产计划<br>2024.1A01</div>
<div class="cell" style="left:301px;top:365px;width:107px;height:48px">SCJHXSDD2309<br>27-07-240131-01</div>
<div class="cell" style="left:408px;top:365px;width:97px;height:48px">2024-01-01</div>
<div class="cell" style="left:505px;top:365px;width:105px;height:48px">2024-01-31</div>
<div class="cell" style="left:610px;top:365px;width:101px;height:48px">2023-09-26</div>
<div class="cell" style="left:711px;top:365px;width:112px;height:48px">示例：上海帆软-第<br>4份销售订单</div>
<div class="cell" style="left:823px;top:365px;width:130px;height:48px">Dell电脑B型</div>
<div class="cell" style="left:953px;top:365px;width:83px;height:48px">C0002</div>
<div class="cell" style="left:1036px;top:365px;width:80px;height:48px">成品</div>
<div class="cell" style="left:1116px;top:365px;width:100px;height:48px">B2100001</div>
<div class="bd" style="left:9px;top:370px;width:46px;background:#3f84ec">已计划</div>
<div class="bd" style="left:97px;top:370px;width:56px;background:#17b0d2">订单计划</div>
<div class="abs" style="left:87px;top:30px;width:1px;height:360px;background:#6285b8"></div>
<div class="abs" style="left:187px;top:30px;width:1px;height:360px;background:#6285b8"></div>
<div class="abs" style="left:301px;top:30px;width:1px;height:360px;background:#6285b8"></div>
<div class="abs" style="left:408px;top:30px;width:1px;height:360px;background:#6285b8"></div>
<div class="abs" style="left:505px;top:30px;width:1px;height:360px;background:#6285b8"></div>
<div class="abs" style="left:610px;top:30px;width:1px;height:360px;background:#6285b8"></div>
<div class="abs" style="left:711px;top:30px;width:1px;height:360px;background:#6285b8"></div>
<div class="abs" style="left:823px;top:30px;width:1px;height:360px;background:#6285b8"></div>
<div class="abs" style="left:953px;top:30px;width:1px;height:360px;background:#6285b8"></div>
<div class="abs" style="left:1036px;top:30px;width:1px;height:360px;background:#6285b8"></div>
<div class="abs" style="left:1116px;top:30px;width:1px;height:360px;background:#6285b8"></div>
</div>
<div class="abs" style="left:264px;top:902px;width:1168px;height:1px;background:#9fb0c6"></div>
<div class="btn" style="left:273px;top:908px;width:26px;height:27px;border-color:#b9c3d6;border-radius:3px"></div>
<svg class="abs" style="left:280px;top:915px" width="12" height="12" viewBox="0 0 12 12"><rect x="0.8" y="0.8" width="10.4" height="10.4" rx="1.5" stroke="#3a3f47" stroke-width="1.3" fill="none"/><path d="M6 2.8v6.4M4.5 4.3L6 2.8l1.5 1.5M4.5 7.7L6 9.2l1.5-1.5" stroke="#3a3f47" stroke-width="1" fill="none"/></svg>
<div class="btn" style="left:303px;top:908px;width:88px;height:27px;border-color:#b9c3d6;border-radius:3px;text-align:left;padding-left:8px;font-size:11px;line-height:26px">20 条/页</div>
<svg class="abs" style="left:370px;top:918px" width="11" height="7" viewBox="0 0 11 7"><path d="M1 1l4.5 4.5L10 1" stroke="#3a3f47" stroke-width="1.3" fill="none"/></svg>
<div class="t" style="left:401px;top:917px;font-size:11px;color:#2b2f36">共52条</div>
<div class="btn" style="left:1309px;top:908px;width:29px;height:27px;border-color:#b9c3d6;border-radius:3px;font-size:11px;line-height:26px">1</div>
<div class="t" style="left:1341px;top:917px;font-size:11px;color:#2b2f36">/ 3</div>
<div class="btn" style="left:1364px;top:908px;width:28px;height:27px;border-color:#b9c3d6;border-radius:3px"></div>
<svg class="abs" style="left:1374px;top:916px" width="7" height="11" viewBox="0 0 7 11"><path d="M6 1L1.5 5.5 6 10" stroke="#2b2f36" stroke-width="1.3" fill="none"/></svg>
<div class="btn" style="left:1396px;top:908px;width:28px;height:27px;border-color:#b9c3d6;border-radius:3px"></div>
<svg class="abs" style="left:1406px;top:916px" width="7" height="11" viewBox="0 0 7 11"><path d="M1 1l4.5 4.5L1 10" stroke="#3b6fc9" stroke-width="1.3" fill="none"/></svg>
<div class="t" style="left:1019px;top:869px;font-size:41px;color:#fff;text-shadow:2px 4px 1.5px rgba(110,110,110,.6);letter-spacing:1px"><b>知乎</b> @<b>孙英达</b><span style="letter-spacing:3.5px">Adam</span></div>
</body></html>
